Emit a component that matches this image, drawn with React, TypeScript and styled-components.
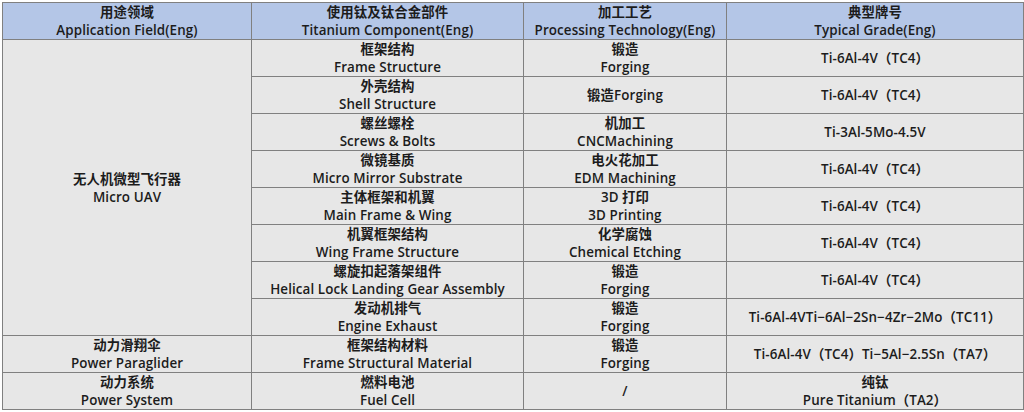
import React from "react";
import styled, { createGlobalStyle } from "styled-components";

const GlobalStyle = createGlobalStyle`
  body {
    margin: 0;
    background: #ffffff;
    font-family: "Open Sans", "Noto Sans CJK SC", sans-serif;
  }
`;

const Wrapper = styled.div`
  padding: 2px 0 0 2px;
`;

const Table = styled.table`
  border-collapse: collapse;
  table-layout: fixed;
  width: 1017px;
  color: #1c1c1c;
  font-size: 13.4px;
  font-weight: 600;
  line-height: 18px;
  text-align: center;
  letter-spacing: 0.1px;
`;

const HeadRow = styled.tr`
  height: 37px;
  background: #b4c6e7;
`;

const BodyRow = styled.tr`
  height: 37px;
  background: #e7e7e7;
`;

const Th = styled.th<{ $w: number }>`
  width: ${(p) => p.$w}px;
  border: 1px solid #808080;
  padding: 0;
  font-weight: 600;
  vertical-align: middle;
`;

const Td = styled.td`
  border: 1px solid #808080;
  padding: 0;
  vertical-align: middle;
`;

const Line = styled.div`
  white-space: nowrap;
`;

type Cell = { cn?: string; en: string };

const Both = ({ cell }: { cell: Cell }) => (
  <>
    {cell.cn && <Line>{cell.cn}</Line>}
    <Line>{cell.en}</Line>
  </>
);

const headers: { cell: Cell; w: number }[] = [
  { cell: { cn: "用途领域", en: "Application Field(Eng)" }, w: 248 },
  { cell: { cn: "使用钛及钛合金部件", en: "Titanium Component(Eng)" }, w: 271 },
  { cell: { cn: "加工工艺", en: "Processing Technology(Eng)" }, w: 202 },
  { cell: { cn: "典型牌号", en: "Typical Grade(Eng)" }, w: 296 },
];

type Row = { field?: { cell: Cell; span: number }; part: Cell; tech: Cell; grade: Cell };

const rows: Row[] = [
  {
    field: { cell: { cn: "无人机微型飞行器", en: "Micro UAV" }, span: 8 },
    part: { cn: "框架结构", en: "Frame Structure" },
    tech: { cn: "锻造", en: "Forging" },
    grade: { en: "Ti-6Al-4V（TC4）" },
  },
  {
    part: { cn: "外壳结构", en: "Shell Structure" },
    tech: { en: "锻造Forging" },
    grade: { en: "Ti-6Al-4V（TC4）" },
  },
  {
    part: { cn: "螺丝螺栓", en: "Screws & Bolts" },
    tech: { cn: "机加工", en: "CNCMachining" },
    grade: { en: "Ti-3Al-5Mo-4.5V" },
  },
  {
    part: { cn: "微镜基质", en: "Micro Mirror Substrate" },
    tech: { cn: "电火花加工", en: "EDM Machining" },
    grade: { en: "Ti-6Al-4V（TC4）" },
  },
  {
    part: { cn: "主体框架和机翼", en: "Main Frame & Wing" },
    tech: { cn: "3D 打印", en: "3D Printing" },
    grade: { en: "Ti-6Al-4V（TC4）" },
  },
  {
    part: { cn: "机翼框架结构", en: "Wing Frame Structure" },
    tech: { cn: "化学腐蚀", en: "Chemical Etching" },
    grade: { en: "Ti-6Al-4V（TC4）" },
  },
  {
    part: { cn: "螺旋扣起落架组件", en: "Helical Lock Landing Gear Assembly" },
    tech: { cn: "锻造", en: "Forging" },
    grade: { en: "Ti-6Al-4V（TC4）" },
  },
  {
    part: { cn: "发动机排气", en: "Engine Exhaust" },
    tech: { cn: "锻造", en: "Forging" },
    grade: { en: "Ti-6Al-4VTi−6Al−2Sn−4Zr−2Mo（TC11）" },
  },
  {
    field: { cell: { cn: "动力滑翔伞", en: "Power Paraglider" }, span: 1 },
    part: { cn: "框架结构材料", en: "Frame Structural Material" },
    tech: { cn: "锻造", en: "Forging" },
    grade: { en: "Ti-6Al-4V（TC4）Ti−5Al−2.5Sn（TA7）" },
  },
  {
    field: { cell: { cn: "动力系统", en: "Power System" }, span: 1 },
    part: { cn: "燃料电池", en: "Fuel Cell" },
    tech: { en: "/" },
    grade: { cn: "纯钛", en: "Pure Titanium（TA2）" },
  },
];

const App = () => (
  <Wrapper>
    <GlobalStyle />
    <Table>
      <thead>
        <HeadRow>
          {headers.map((h) => (
            <Th key={h.cell.en} $w={h.w}>
              <Both cell={h.cell} />
            </Th>
          ))}
        </HeadRow>
      </thead>
      <tbody>
        {rows.map((r, i) => (
          <BodyRow key={i}>
            {r.field && (
              <Td rowSpan={r.field.span}>
                <Both cell={r.field.cell} />
              </Td>
            )}
            <Td>
              <Both cell={r.part} />
            </Td>
            <Td>
              <Both cell={r.tech} />
            </Td>
            <Td>
              <Both cell={r.grade} />
            </Td>
          </BodyRow>
        ))}
      </tbody>
    </Table>
  </Wrapper>
);

export default App;
